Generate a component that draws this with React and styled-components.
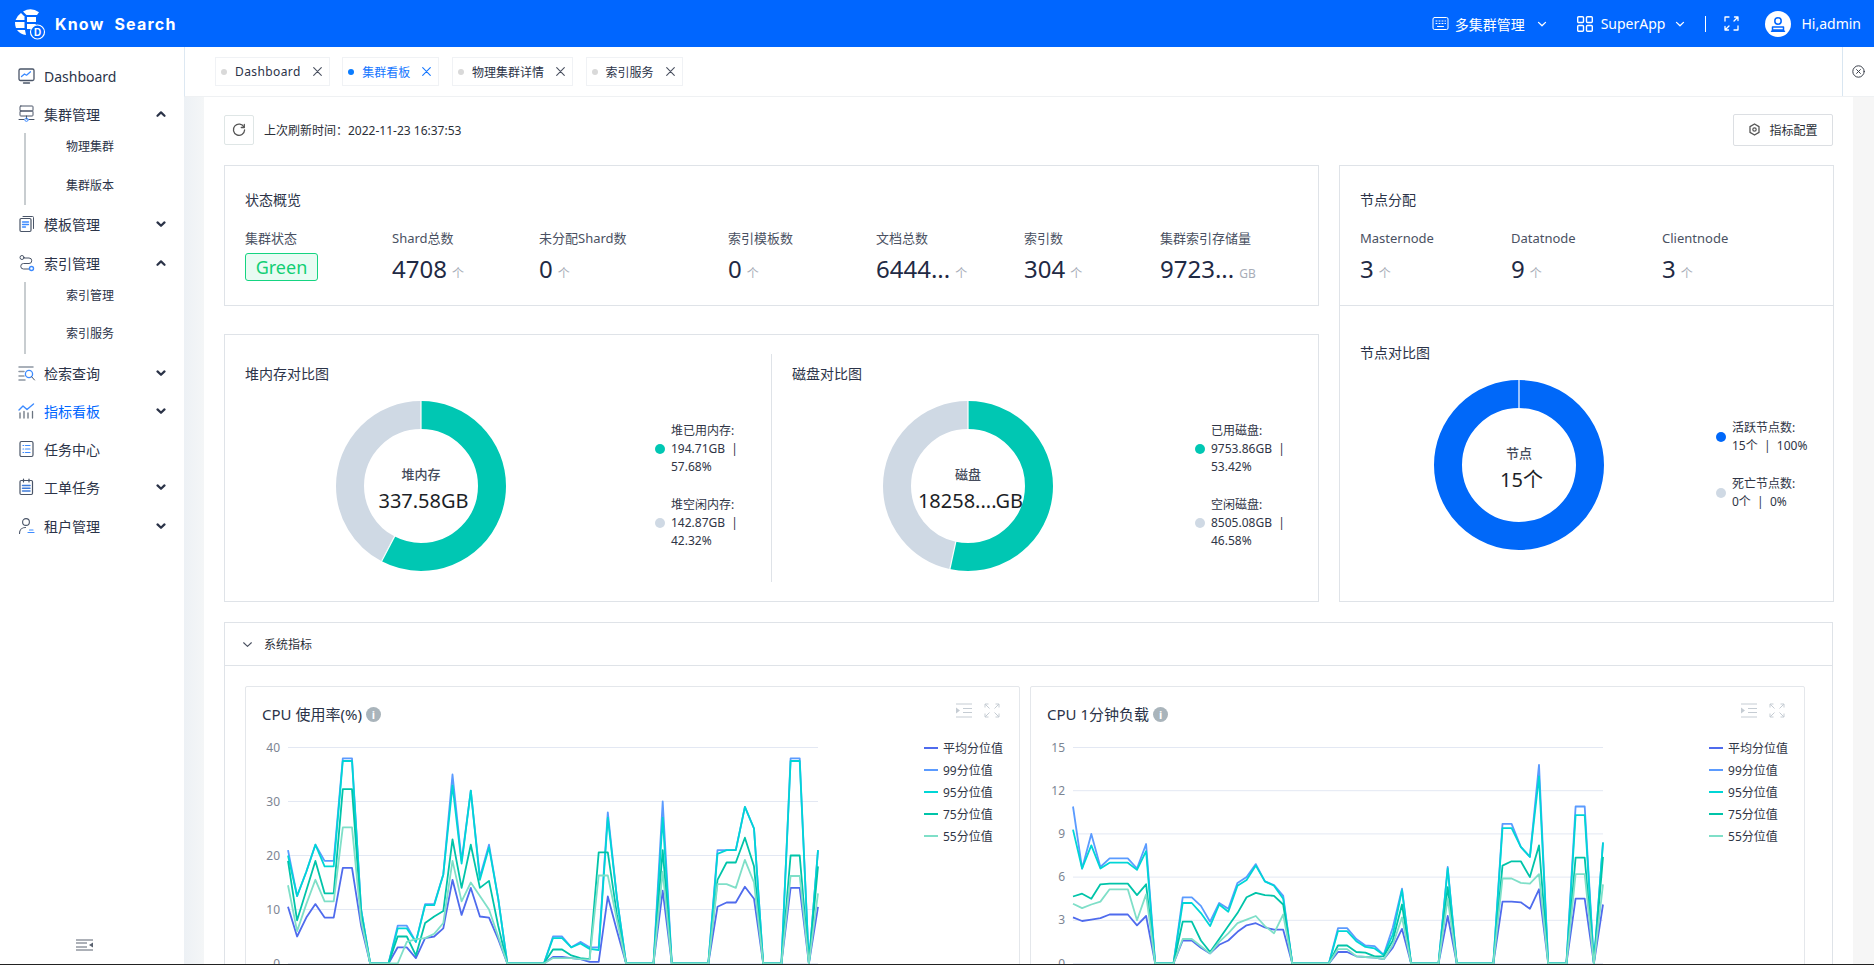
import React from 'react';
import styled, { createGlobalStyle } from 'styled-components';

const GlobalStyle = createGlobalStyle`
    * { box-sizing: border-box; }
    html, body { margin: 0; padding: 0; height: 100%; overflow: hidden; background: #fff; }
    body {
        font-family: "Noto Sans", "Noto Sans CJK SC", sans-serif;
        color: #2b3348;
    }
`;

const BLUE = '#0066ff';
const TEAL = '#00c7b3';
const GREY = '#cfd9e4';

const Shell = styled.div`
    height: 100vh;
    display: flex;
    flex-direction: column;
    overflow: hidden;
    border-bottom: 1px solid #222;
`;

/* ---------- top header ---------- */
const Header = styled.header`
    flex: 0 0 47px;
    background: ${BLUE};
    color: #fff;
    display: flex;
    align-items: center;
    padding-left: 14px;
`;

const Brand = styled.div`
    margin-left: 9px;
    font-family: "Inter", sans-serif;
    font-weight: 700;
    font-size: 16px;
    letter-spacing: 1.2px;
    white-space: pre;
`;

const HeaderRight = styled.div`
    margin-left: auto;
    display: flex;
    align-items: center;
    padding-right: 13px;
`;

const HeaderText = styled.span`
    font-size: 14px;
    margin-left: ${(p) => p.$ml || 0}px;
    white-space: nowrap;
`;

const HeaderChevron = styled.span`
    display: flex;
    margin-left: ${(p) => p.$ml || 0}px;
    margin-right: ${(p) => p.$mr || 0}px;
`;

const HeaderDivider = styled.span`
    width: 1px;
    height: 16px;
    background: #fff;
    margin: 0 18px 0 20px;
`;

const Avatar = styled.span`
    width: 26px;
    height: 26px;
    border-radius: 50%;
    background: #fff;
    margin-left: 26px;
    display: flex;
    align-items: center;
    justify-content: center;
`;

/* ---------- sidebar ---------- */
const Layout = styled.div`
    flex: 1;
    display: flex;
    min-height: 0;
`;

const Sidebar = styled.aside`
    flex: 0 0 184px;
    background: #fff;
    padding-top: 10px;
    position: relative;
    z-index: 1;
`;

const NavItem = styled.div`
    height: 38.2px;
    display: flex;
    align-items: center;
    padding-left: 18px;
    font-size: 14px;
    color: ${(p) => (p.$active ? BLUE : '#2b3348')};
`;

const NavLabel = styled.span`
    margin-left: 8px;
    flex: 1;
`;

const NavChevron = styled.span`
    display: flex;
    margin-right: 18px;
`;

const SubList = styled.div`
    margin-left: 24px;
    height: 72px;
    border-left: 2px solid #c8cdd0;
    padding: 0 0 5px 40px;
    display: flex;
    flex-direction: column;
    gap: 10.5px;
`;

const SubItem = styled.div`
    height: 28px;
    line-height: 28px;
    font-size: 12px;
    color: #2b3348;
`;

const CollapseButton = styled.div`
    position: absolute;
    left: 76px;
    bottom: 13px;
    display: flex;
`;

/* ---------- tabs ---------- */
const Main = styled.main`
    flex: 1;
    min-width: 0;
    display: flex;
    flex-direction: column;
`;

const TabBar = styled.div`
    flex: 0 0 50px;
    display: flex;
    align-items: center;
    border-left: 1px solid #dde8f2;
    border-bottom: 1px solid #eff1f3;
    padding-left: 30px;
    gap: 12.6px;
    background: #fff;
    position: relative;
`;

const Tab = styled.div`
    height: 29px;
    display: flex;
    align-items: center;
    border: 1px solid #f0f2f5;
    padding: 0 7px 0 5px;
    font-size: 12px;
    letter-spacing: ${(p) => (p.$latin ? '0.4px' : 0)};
    color: ${(p) => (p.$active ? '#1677ff' : '#2b3348')};
`;

const TabDot = styled.span`
    width: 6px;
    height: 6px;
    border-radius: 50%;
    margin-right: 8px;
    background: ${(p) => (p.$active ? '#0a7cff' : '#d9d9d9')};
`;

const TabClose = styled.span`
    display: flex;
    margin-left: 12px;
`;

const TabBarEnd = styled.div`
    position: absolute;
    right: 0;
    top: 0;
    bottom: 0;
    width: 32px;
    border-left: 1px solid #d9e6f1;
    display: flex;
    align-items: center;
    justify-content: center;
`;

/* ---------- page ---------- */
const Scroller = styled.div`
    flex: 1;
    min-height: 0;
    overflow: hidden;
    padding: 0 21px 0 20px;
    background: linear-gradient(90deg, #edf1f5 0, #f4f6f7 20px, #f6f6f6 100%);
`;

const Content = styled.div`
    background: #fff;
    padding: 17px 20px 0;
`;

const Toolbar = styled.div`
    display: flex;
    align-items: center;
    height: 31px;
    margin-bottom: 20px;
`;

const RefreshButton = styled.div`
    width: 30px;
    height: 30px;
    border: 1px solid #dfe6e6;
    border-radius: 2px;
    display: flex;
    align-items: center;
    justify-content: center;
`;

const RefreshText = styled.span`
    margin-left: 10px;
    font-size: 12px;
    color: #2b2f38;
`;

const ConfigButton = styled.div`
    margin-left: auto;
    width: 100px;
    height: 32px;
    border: 1px solid #dcdfe3;
    border-radius: 2px;
    display: flex;
    align-items: center;
    justify-content: center;
    gap: 8px;
    font-size: 12px;
    color: #2b2f38;
`;

const OverviewGrid = styled.div`
    display: grid;
    grid-template-columns: 1095px 1fr;
    gap: 20px;
`;

const LeftColumn = styled.div`
    display: flex;
    flex-direction: column;
    gap: 28px;
`;

const Card = styled.section`
    border: 1px solid #dfe3e8;
    background: #fff;
`;

const StatusCard = styled(Card)`
    height: 141px;
    padding: 24px 20px 0;
`;

const NodeCard = styled(Card)`
    display: flex;
    flex-direction: column;
`;

const NodeTop = styled.div`
    height: 140px;
    padding: 24px 20px 0;
    border-bottom: 1px solid #dfe3e8;
`;

const NodeBottom = styled.div`
    padding: 37px 20px 0;
`;

const CardTitle = styled.h3`
    margin: 0;
    font-size: 14px;
    font-weight: 400;
    line-height: 20px;
    color: #2b3348;
`;

const StatRow = styled.div`
    display: flex;
    margin-top: 19px;
`;

const Stat = styled.div`
    flex: 0 0 ${(p) => p.$w}px;
`;

const StatLabel = styled.div`
    font-size: 13px;
    line-height: 18px;
    color: #4a5162;
    white-space: nowrap;
`;

const StatValue = styled.div`
    margin-top: 6px;
    display: flex;
    align-items: baseline;
    height: 32px;
    font-size: 24px;
    line-height: 32px;
    color: #1f2a44;
`;

const StatUnit = styled.span`
    font-size: 12px;
    color: #a8adb8;
    margin-left: 5px;
`;

const HealthBadge = styled.span`
    display: inline-block;
    width: 73px;
    height: 28px;
    margin-top: 6px;
    border: 1px solid #15d481;
    border-radius: 3px;
    background: #e9fbf3;
    color: #12cf74;
    font-size: 18px;
    line-height: 26px;
    text-align: center;
`;

const CompareCard = styled(Card)`
    height: 268px;
    display: flex;
    padding: 19px 0;
`;

const ComparePane = styled.div`
    flex: 0 0 ${(p) => p.$w}px;
    padding: 10px 0 0 ${(p) => p.$pl}px;
    border-right: ${(p) => (p.$divider ? '1px solid #dfe3e8' : 'none')};
`;

const DonutRow = styled.div`
    display: flex;
    align-items: center;
    margin-top: ${(p) => p.$mt}px;
    padding-left: ${(p) => p.$pl}px;
`;

const DonutBox = styled.div`
    position: relative;
    width: 170px;
    height: 170px;
    flex: none;
`;

const DonutCenter = styled.div`
    position: absolute;
    left: 0;
    right: 0;
    top: 62px;
    text-align: center;
`;

const DonutName = styled.div`
    font-size: 13px;
    font-weight: 500;
    line-height: 22px;
    color: #454b5c;
`;

const DonutValue = styled.div`
    font-size: 20px;
    line-height: 32px;
    color: #1c1f27;
    padding-left: 5px;
    white-space: nowrap;
`;

const Legend = styled.div`
    margin-left: ${(p) => p.$ml}px;
    display: flex;
    flex-direction: column;
    gap: ${(p) => p.$gap}px;
`;

const LegendItem = styled.div`
    display: flex;
    align-items: center;
`;

const LegendDot = styled.span`
    width: 10px;
    height: 10px;
    border-radius: 50%;
    flex: none;
    margin-right: 6px;
    background: ${(p) => p.$color};
`;

const LegendText = styled.div`
    font-size: 12px;
    line-height: 18px;
    color: #2f3546;
    white-space: pre;
`;

/* ---------- system metrics ---------- */
const MetricsPanel = styled.section`
    margin-top: 20px;
    border: 1px solid #dfe3e8;
`;

const PanelHeader = styled.div`
    height: 43px;
    display: flex;
    align-items: center;
    padding-left: 17px;
    gap: 11px;
    font-size: 12px;
    color: #2b2f38;
    border-bottom: 1px solid #dfe3e8;
`;

const PanelBody = styled.div`
    display: flex;
    gap: 10px;
    padding: 20px;
`;

const ChartCard = styled.div`
    flex: 0 0 773px;
    border: 1px solid #e4e7eb;
    border-radius: 2px;
    padding: 16px 16px 0;
`;

const ChartHeader = styled.div`
    height: 36px;
    display: flex;
    align-items: flex-start;
`;

const ChartTitle = styled.div`
    font-size: 15px;
    line-height: 22px;
    color: #2b3348;
    display: flex;
    align-items: center;
    gap: 4px;
`;

const InfoDot = styled.span`
    width: 15px;
    height: 15px;
    border-radius: 50%;
    background: #a9b4bb;
    color: #fff;
    font-size: 11px;
    font-weight: 700;
    line-height: 15px;
    text-align: center;
`;

const ChartTools = styled.div`
    margin-left: auto;
    margin-right: 3px;
    display: flex;
    gap: 12px;
`;

const ChartBody = styled.div`
    display: flex;
    align-items: flex-start;
`;

const ChartLegend = styled.div`
    margin-left: 2px;
    display: flex;
    flex-direction: column;
    gap: 4px;
`;

const ChartLegendItem = styled.div`
    height: 18px;
    display: flex;
    align-items: center;
    font-size: 12px;
    color: #2f3546;
    white-space: nowrap;
`;

const ChartLegendLine = styled.span`
    width: 14px;
    height: 2px;
    margin-right: 5px;
    background: ${(p) => p.$color};
`;

/* ---------- icons ---------- */
const INK = '#4a5568';
const SKY = '#3d8bff';

const Svg = ({ size = 18, box = 18, children }) => (
    <svg width={size} height={size} viewBox={`0 0 ${box} ${box}`} fill="none" strokeLinecap="round" strokeLinejoin="round">
        {children}
    </svg>
);

const Logo = () => (
    <svg width="32" height="32" viewBox="0 0 32 32">
        <path d="M9 3.5 A14.5 14.5 0 0 1 25 4.2 L23 7 L12.5 7 Z" fill="#fff" />
        <path d="M7 5 L10.5 8.5 L10.5 12 L1.6 12 A14.5 14.5 0 0 1 7 5 Z" fill="#fff" />
        <path d="M13 9 L22 9 L22 14 L13 14 Z" fill="#fff" />
        <path d="M1 14 L10.5 14 L10.5 20 L2 20 A14.5 14.5 0 0 1 1 14 Z" fill="#fff" />
        <path d="M13 16 L22 16 L19 21 L13 21 Z" fill="#fff" />
        <path d="M3 22 L11 22 L12 27 A14 14 0 0 1 3 22 Z" fill="#fff" />
        <circle cx="23.5" cy="24" r="7" fill={BLUE} stroke="#fff" strokeWidth="1.2" />
        <text x="23.5" y="27.5" textAnchor="middle" fontSize="10" fontWeight="700" fill="#fff" fontFamily="Inter, sans-serif">D</text>
    </svg>
);

const KeyboardIcon = () => (
    <Svg size={17} box={17}>
        <rect x="1" y="2.5" width="15" height="12" rx="1.5" stroke="#fff" />
        <path d="M4 6h1M7 6h1M10 6h1M13 6h0.5M4 8.5h1M7 8.5h1M10 8.5h1M13 8.5h0.5M5.5 11.5h6" stroke="#fff" />
    </Svg>
);

const GridIcon = () => (
    <Svg size={16} box={16}>
        <rect x="0.7" y="0.7" width="5.8" height="5.8" rx="1" stroke="#fff" strokeWidth="1.4" />
        <rect x="9.5" y="0.7" width="5.8" height="5.8" rx="1" stroke="#fff" strokeWidth="1.4" />
        <rect x="0.7" y="9.5" width="5.8" height="5.8" rx="1" stroke="#fff" strokeWidth="1.4" />
        <rect x="9.5" y="9.5" width="5.8" height="5.8" rx="1" stroke="#fff" strokeWidth="1.4" />
    </Svg>
);

const FullscreenIcon = () => (
    <Svg size={15} box={15}>
        <path d="M1 5V1h4M10 14h4v-4M14 1 10 5M14 1h-3.5M14 1v3.5M1 14l4-4M1 14h3.5M1 14v-3.5" stroke="#fff" strokeWidth="1.3" />
    </Svg>
);

const AvatarIcon = () => (
    <Svg size={18} box={18}>
        <circle cx="9" cy="6" r="3.2" stroke={BLUE} strokeWidth="1.5" />
        <path d="M3.5 15v-3h11v3zM2.5 16.3h13" stroke={BLUE} strokeWidth="1.5" />
    </Svg>
);

const Chevron = ({ up, color = '#2b3348', width = 2.2, size = 10 }) => (
    <Svg size={size} box={10}>
        <path d={up ? 'M1.5 6.8 5 3.4l3.5 3.4' : 'M1.5 3.4 5 6.8l3.5-3.4'} stroke={color} strokeWidth={width} />
    </Svg>
);

const CloseGlyph = ({ color = '#4a5060' }) => (
    <Svg size={9} box={9}>
        <path d="M0.7 0.7l7.6 7.6M8.3 0.7 0.7 8.3" stroke={color} strokeWidth="1.1" />
    </Svg>
);

const navIcons = {
    dashboard: (
        <>
            <rect x="1" y="2" width="15" height="11.5" rx="1.5" stroke={INK} strokeWidth="1.3" />
            <path d="M3.5 9.5 6.5 7l2 1.2 4-3.4" stroke={SKY} strokeWidth="1.3" />
            <path d="M5.5 16h6" stroke={INK} strokeWidth="1.3" />
        </>
    ),
    cluster: (
        <>
            <rect x="2" y="1" width="13" height="5" rx="0.8" stroke={INK} />
            <rect x="2" y="6" width="13" height="5" rx="0.8" stroke={INK} />
            <path d="M8.5 11v3M1 14.5h5M11 14.5h5" stroke={INK} />
            <circle cx="8.5" cy="14.7" r="1.7" stroke={SKY} />
        </>
    ),
    template: (
        <>
            <path d="M5 1.5h9.5a1 1 0 0 1 1 1v11" stroke={INK} />
            <rect x="2" y="3.5" width="11" height="13" rx="1.2" stroke={INK} strokeWidth="1.2" />
            <path d="M4.5 7h6M4.5 9.5h6M4.5 12h3" stroke={SKY} strokeWidth="1.3" />
        </>
    ),
    index: (
        <>
            <circle cx="4" cy="3.5" r="2" stroke={INK} />
            <path d="M6 4h5a2.5 2.5 0 0 1 0 5.5H5.5a2.5 2.5 0 0 0 0 5.5h6" stroke={INK} />
            <circle cx="13.5" cy="14.5" r="2" stroke={SKY} strokeWidth="1.4" />
        </>
    ),
    search: (
        <>
            <path d="M1 3h14M1 7.5h5M1 12h5M1 16h6" stroke="#8d96a3" strokeWidth="1.5" />
            <circle cx="11" cy="10" r="3.6" stroke={SKY} strokeWidth="1.3" />
            <path d="M13.6 12.7 16.5 16" stroke={INK} />
        </>
    ),
    metric: (
        <>
            <path d="M1 8 5 4l4 3.5L15.5 2" stroke={SKY} strokeWidth="1.4" />
            <path d="M2 11v5M6 9.5V16M10 11v5M14.5 9.5V16" stroke="#6b7480" strokeWidth="1.3" />
        </>
    ),
    task: (
        <>
            <rect x="2" y="1.5" width="13" height="15" rx="1.5" stroke={INK} strokeWidth="1.2" />
            <path d="M5 5.5h.7M7.5 5.5H12M5 9h.7M7.5 9H12M5 12.5h.7M7.5 12.5H12" stroke={SKY} strokeWidth="1.2" />
        </>
    ),
    order: (
        <>
            <rect x="2" y="2.5" width="12.5" height="14" rx="1.2" stroke={INK} strokeWidth="1.2" />
            <path d="M5.5 1v3M11 1v3" stroke={INK} strokeWidth="1.2" />
            <path d="M4.5 7.5h7.5M4.5 10.3h7.5M4.5 13h7.5" stroke="#3f7bd8" strokeWidth="1.5" />
        </>
    ),
    tenant: (
        <>
            <circle cx="8" cy="5" r="3.4" stroke={INK} strokeWidth="1.1" />
            <path d="M1.5 16.5c0-3.5 2.5-6 6-6" stroke={INK} strokeWidth="1.1" />
            <path d="M11.5 13h3.5M10 15.5h6" stroke={SKY} strokeWidth="1.2" />
        </>
    ),
};

const RefreshIcon = () => (
    <Svg size={14} box={14}>
        <path d="M12 4.2A5.6 5.6 0 1 0 12.6 7" stroke="#555" strokeWidth="1.3" />
        <path d="M12.3 1.5v3h-3" stroke="#555" strokeWidth="1.3" />
    </Svg>
);

const GearIcon = () => (
    <Svg size={13} box={13}>
        <path d="M6.5 1 11 3.6v5.8L6.5 12 2 9.4V3.6z" stroke="#555" strokeWidth="1.3" />
        <circle cx="6.5" cy="6.5" r="1.7" stroke="#555" strokeWidth="1.2" />
    </Svg>
);

const CloseCircleIcon = () => (
    <Svg size={13} box={13}>
        <circle cx="6.5" cy="6.5" r="5.7" stroke="#3a3f4a" />
        <path d="M4.6 4.6l3.8 3.8M8.4 4.6 4.6 8.4" stroke="#3a3f4a" />
    </Svg>
);

const CollapseIcon = () => (
    <svg width="18" height="12" viewBox="0 0 18 12" fill="none">
        <path d="M0 1h17M0 4h11M0 8h11M0 11h17" stroke="#5a6270" />
        <path d="M17 3.5v5L13 6z" fill="#5a6270" />
    </svg>
);

const IndentIcon = () => (
    <svg width="16" height="15" viewBox="0 0 16 15" fill="none">
        <path d="M0 1h16M7 5.5h9M7 9.5h9M0 14h16" stroke="#c5ccd3" />
        <path d="M0 4.5 4 7.5 0 10.5z" fill="#c5ccd3" />
    </svg>
);

const ExpandIcon = () => (
    <svg width="16" height="15" viewBox="0 0 16 15" fill="none">
        <path d="M1 1l4.5 4.5M1 1v3.5M1 1h3.5M15 1l-4.5 4.5M15 1v3.5M15 1h-3.5M1 14l4.5-4.5M1 14v-3.5M1 14h3.5M15 14l-4.5-4.5M15 14v-3.5M15 14h-3.5" stroke="#c5ccd3" />
    </svg>
);

/* ---------- donut ---------- */
const Donut = ({ segments, name, value }) => {
    const r = 71;
    const len = 2 * Math.PI * r;
    const total = segments.reduce((s, x) => s + x.value, 0);
    let used = 0;
    const arcs = [];
    const cuts = [];
    segments.forEach((seg) => {
        const part = seg.value / total;
        arcs.push(
            <circle
                key={seg.color}
                cx="85"
                cy="85"
                r={r}
                fill="none"
                stroke={seg.color}
                strokeWidth="28"
                strokeDasharray={`${part * len} ${len}`}
                strokeDashoffset={-used * len}
                transform="rotate(-90 85 85)"
            />
        );
        const a = used * 2 * Math.PI;
        cuts.push(
            <line
                key={`cut-${seg.color}`}
                x1={85 + 56 * Math.sin(a)}
                y1={85 - 56 * Math.cos(a)}
                x2={85 + 86 * Math.sin(a)}
                y2={85 - 86 * Math.cos(a)}
                stroke="#fff"
                strokeWidth="1.2"
            />
        );
        used += part;
    });
    return (
        <DonutBox>
            <svg width="170" height="170" viewBox="0 0 170 170">
                {arcs}
                {cuts}
            </svg>
            <DonutCenter>
                <DonutName>{name}</DonutName>
                <DonutValue>{value}</DonutValue>
            </DonutCenter>
        </DonutBox>
    );
};

/* ---------- line chart ---------- */
const SERIES = [
    { name: '平均分位值', color: '#4f6bed', col: 4 },
    { name: '99分位值', color: '#5b9bff', col: 0 },
    { name: '95分位值', color: '#00d6d6', col: 1 },
    { name: '75分位值', color: '#00c4a9', col: 2 },
    { name: '55分位值', color: '#7fdfc8', col: 3 },
];

const O = [0, 0, 0, 0, 0];

const cpuUsage = [
    [21, 20, 19, 14.5, 10.5], [12.5, 12.5, 8, 6, 5], [17, 17, 13.5, 11, 8.5], [22, 22, 19, 15.5, 11],
    [19, 18, 13, 11.5, 8.5], [19, 18, 13, 11.5, 8.5], [38, 37.5, 32.3, 25.2, 17.7], [38, 37.5, 32.3, 25.2, 17.7],
    [10, 10, 9, 8, 7], O, O, O,
    [7, 6.5, 5, 0, 3], [7, 6.5, 5, 4, 3], [4, 4, 1.5, 4.5, 1], [11, 10.8, 7.5, 4.7, 4.7],
    [11, 10.8, 8.7, 5.5, 5], [16.5, 16.5, 9.7, 7.5, 6.5], [35, 33, 23, 19, 15.5], [19, 18.5, 14, 11.5, 9],
    [32, 32, 22, 15, 14], [16, 15.5, 14, 12.5, 8.7], [22, 21.5, 15.3, 10, 8.5], [12, 12, 7, 5, 4.5],
    O, O, O, O, O,
    [5, 4.7, 2.6, 1, 1.2], [5, 4.7, 2.6, 1, 1.2], [3, 3, 1.5, 1, 1], [4, 3.7, 1, 0.8, 0.8],
    [3, 2.7, 0.8, 0.7, 0.3], [3, 2.5, 20.6, 16.3, 0.3], [28, 27, 20.6, 16.3, 12.4], [12, 12, 9, 8, 6],
    O, O, O, O,
    [30, 27, 21, 17, 13.5], O, O, O, O, O,
    [21, 20.3, 15.5, 14.7, 10.5], [21, 21, 18.7, 14.7, 11.3], [21, 21, 18.7, 14, 11.3], [29, 29, 23.3, 19.2, 14.2],
    [25, 25, 18, 15, 12], O, O, O,
    [38, 37.5, 20, 16.2, 14], [38, 37.5, 20, 16.2, 14], O, [21, 21, 18, 13, 10.5],
];

const cpuLoad = [
    [10.9, 9.3, 4.65, 4.15, 3.2], [6.6, 6.6, 4.85, 3.85, 2.95], [9, 8.2, 4.5, 4.1, 3.05], [6.7, 6.6, 5.5, 4.3, 3.15],
    [7.3, 7, 5.55, 5.15, 3.4], [7.3, 7, 5.55, 5.15, 3.4], [7.3, 7, 5.55, 5.15, 3.4], [6.6, 6.5, 4.75, 3, 2.65],
    [8.3, 7.8, 5.5, 4.8, 3.3], O, O, O,
    [4.6, 4.2, 2.9, 1.7, 1.6], [4.6, 4.2, 2.9, 1.7, 1.6], [4, 3.5, 1.6, 1.2, 1.1], [2.9, 2.6, 0.8, 0.7, 0.7],
    [4.2, 4.1, 1.7, 1.5, 1.3], [3.8, 3.6, 2.6, 2.1, 1.6], [5.6, 5.4, 3.5, 2.8, 2.2], [6, 5.8, 4.6, 3.05, 2.65],
    [6.9, 6.8, 4.9, 3.3, 2.8], [5.7, 5.7, 4.75, 2.6, 2.5], [5.45, 5.4, 4.7, 2.1, 2.35], [4.7, 4.5, 4.1, 3.4, 2.35],
    O, O, O, O, O,
    [2.45, 2.25, 1.25, 1, 0.8], [2.45, 2.25, 1.25, 1, 0.8], [1.7, 1.55, 0.8, 0.5, 0.5], [1.25, 1.15, 0.75, 0.45, 0.45],
    [1.2, 1.05, 0.5, 0.4, 0.4], [0.6, 0.6, 0.5, 0.3, 0.3], [2.5, 2, 1.6, 1.3, 1.1], [5.2, 5.1, 4.1, 3.2, 2.4],
    O, O, O, O,
    [6.7, 6.6, 5.3, 4.5, 3.3], O, O, O, O, O,
    [9.7, 9.4, 6.8, 5.9, 4.3], [9.7, 9.4, 7.1, 5.9, 4.3], [8.1, 8.1, 7.1, 5.6, 4.25], [7.4, 7.4, 6, 5.55, 3.8],
    [13.8, 13, 8.2, 6.2, 5.15], O, O, O,
    [10.9, 10.3, 7.35, 6.2, 4.5], [10.9, 10.3, 7.35, 6.2, 4.5], O, [8.4, 8.4, 7.4, 5.5, 4.1],
];

const PLOT_LEFT = 26;
const PLOT_RIGHT = 556;
const PLOT_TOP = 8.5;
const PLOT_BOTTOM = 224.5;

const LineChart = ({ rows, max, ticks }) => {
    const x = (i) => PLOT_LEFT + (i * (PLOT_RIGHT - PLOT_LEFT)) / (rows.length - 1);
    const y = (v) => PLOT_BOTTOM - (v / max) * (PLOT_BOTTOM - PLOT_TOP);
    return (
        <svg width="660" height="240" viewBox="0 0 660 240">
            {ticks.map((t) => (
                <g key={t}>
                    <line x1={PLOT_LEFT} x2={PLOT_RIGHT} y1={y(t)} y2={y(t)} stroke="#e3e8f3" />
                    <text x="18" y={y(t) + 4} textAnchor="end" fontSize="12" fill="#7c8593" fontFamily="Noto Sans, sans-serif">
                        {t}
                    </text>
                </g>
            ))}
            {SERIES.map((s) => (
                <polyline
                    key={s.name}
                    fill="none"
                    stroke={s.color}
                    strokeWidth="1.8"
                    strokeLinejoin="round"
                    points={rows.map((r, i) => `${x(i).toFixed(1)},${y(r[s.col]).toFixed(1)}`).join(' ')}
                />
            ))}
        </svg>
    );
};

const MetricChart = ({ title, rows, max, ticks }) => (
    <ChartCard>
        <ChartHeader>
            <ChartTitle>
                {title}
                <InfoDot>i</InfoDot>
            </ChartTitle>
            <ChartTools>
                <IndentIcon />
                <ExpandIcon />
            </ChartTools>
        </ChartHeader>
        <ChartBody>
            <LineChart rows={rows} max={max} ticks={ticks} />
            <ChartLegend>
                {SERIES.map((s) => (
                    <ChartLegendItem key={s.name}>
                        <ChartLegendLine $color={s.color} />
                        {s.name}
                    </ChartLegendItem>
                ))}
            </ChartLegend>
        </ChartBody>
    </ChartCard>
);

/* ---------- page data ---------- */
const stats = [
    { w: 147, label: 'Shard总数', value: '4708', unit: '个' },
    { w: 189, label: '未分配Shard数', value: '0', unit: '个' },
    { w: 148, label: '索引模板数', value: '0', unit: '个' },
    { w: 148, label: '文档总数', value: '6444...', unit: '个' },
    { w: 136, label: '索引数', value: '304', unit: '个' },
    { w: 150, label: '集群索引存储量', value: '9723...', unit: 'GB' },
];

const nodes = [
    { label: 'Masternode', value: '3' },
    { label: 'Datatnode', value: '9' },
    { label: 'Clientnode', value: '3' },
];

const tabs = [
    { name: 'Dashboard', latin: true },
    { name: '集群看板', active: true },
    { name: '物理集群详情' },
    { name: '索引服务' },
];

const NavRow = ({ icon, label, open, hasChildren, active }) => (
    <NavItem $active={active}>
        <Svg>{navIcons[icon]}</Svg>
        <NavLabel>{label}</NavLabel>
        {hasChildren && (
            <NavChevron>
                <Chevron up={open} />
            </NavChevron>
        )}
    </NavItem>
);

const App = () => (
    <Shell>
        <GlobalStyle />
        <Header>
            <Logo />
            <Brand>{'Know  Search'}</Brand>
            <HeaderRight>
                <KeyboardIcon />
                <HeaderText $ml={6}>多集群管理</HeaderText>
                <HeaderChevron $ml={12} $mr={30}>
                    <Chevron color="#fff" width={1.3} />
                </HeaderChevron>
                <GridIcon />
                <HeaderText $ml={8}>SuperApp</HeaderText>
                <HeaderChevron $ml={10}>
                    <Chevron color="#fff" width={1.3} />
                </HeaderChevron>
                <HeaderDivider />
                <FullscreenIcon />
                <Avatar>
                    <AvatarIcon />
                </Avatar>
                <HeaderText $ml={10}>Hi,admin</HeaderText>
            </HeaderRight>
        </Header>
        <Layout>
            <Sidebar>
                <NavRow icon="dashboard" label="Dashboard" />
                <NavRow icon="cluster" label="集群管理" hasChildren open />
                <SubList>
                    <SubItem>物理集群</SubItem>
                    <SubItem>集群版本</SubItem>
                </SubList>
                <NavRow icon="template" label="模板管理" hasChildren />
                <NavRow icon="index" label="索引管理" hasChildren open />
                <SubList>
                    <SubItem>索引管理</SubItem>
                    <SubItem>索引服务</SubItem>
                </SubList>
                <NavRow icon="search" label="检索查询" hasChildren />
                <NavRow icon="metric" label="指标看板" hasChildren active />
                <NavRow icon="task" label="任务中心" />
                <NavRow icon="order" label="工单任务" hasChildren />
                <NavRow icon="tenant" label="租户管理" hasChildren />
                <CollapseButton>
                    <CollapseIcon />
                </CollapseButton>
            </Sidebar>
            <Main>
                <TabBar>
                    {tabs.map((t) => (
                        <Tab key={t.name} $active={t.active} $latin={t.latin}>
                            <TabDot $active={t.active} />
                            {t.name}
                            <TabClose>
                                <CloseGlyph color={t.active ? '#1677ff' : '#4a5060'} />
                            </TabClose>
                        </Tab>
                    ))}
                    <TabBarEnd>
                        <CloseCircleIcon />
                    </TabBarEnd>
                </TabBar>
                <Scroller>
                    <Content>
                        <Toolbar>
                            <RefreshButton>
                                <RefreshIcon />
                            </RefreshButton>
                            <RefreshText>上次刷新时间：2022-11-23 16:37:53</RefreshText>
                            <ConfigButton>
                                <GearIcon />
                                指标配置
                            </ConfigButton>
                        </Toolbar>
                        <OverviewGrid>
                            <LeftColumn>
                                <StatusCard>
                                    <CardTitle>状态概览</CardTitle>
                                    <StatRow>
                                        <Stat $w={147}>
                                            <StatLabel>集群状态</StatLabel>
                                            <HealthBadge>Green</HealthBadge>
                                        </Stat>
                                        {stats.map((s) => (
                                            <Stat key={s.label} $w={s.w}>
                                                <StatLabel>{s.label}</StatLabel>
                                                <StatValue>
                                                    {s.value}
                                                    <StatUnit>{s.unit}</StatUnit>
                                                </StatValue>
                                            </Stat>
                                        ))}
                                    </StatRow>
                                </StatusCard>
                                <CompareCard>
                                    <ComparePane $w={547} $pl={20} $divider>
                                        <CardTitle>堆内存对比图</CardTitle>
                                        <DonutRow $mt={17} $pl={91}>
                                            <Donut
                                                name="堆内存"
                                                value="337.58GB"
                                                segments={[
                                                    { value: 57.68, color: TEAL },
                                                    { value: 42.32, color: GREY },
                                                ]}
                                            />
                                            <Legend $ml={149} $gap={20}>
                                                <LegendItem>
                                                    <LegendDot $color={TEAL} />
                                                    <LegendText>{'堆已用内存:\n194.71GB  |\n57.68%'}</LegendText>
                                                </LegendItem>
                                                <LegendItem>
                                                    <LegendDot $color={GREY} />
                                                    <LegendText>{'堆空闲内存:\n142.87GB  |\n42.32%'}</LegendText>
                                                </LegendItem>
                                            </Legend>
                                        </DonutRow>
                                    </ComparePane>
                                    <ComparePane $w={546} $pl={20}>
                                        <CardTitle>磁盘对比图</CardTitle>
                                        <DonutRow $mt={17} $pl={91}>
                                            <Donut
                                                name="磁盘"
                                                value="18258....GB"
                                                segments={[
                                                    { value: 53.42, color: TEAL },
                                                    { value: 46.58, color: GREY },
                                                ]}
                                            />
                                            <Legend $ml={142} $gap={20}>
                                                <LegendItem>
                                                    <LegendDot $color={TEAL} />
                                                    <LegendText>{'已用磁盘:\n9753.86GB  |\n53.42%'}</LegendText>
                                                </LegendItem>
                                                <LegendItem>
                                                    <LegendDot $color={GREY} />
                                                    <LegendText>{'空闲磁盘:\n8505.08GB  |\n46.58%'}</LegendText>
                                                </LegendItem>
                                            </Legend>
                                        </DonutRow>
                                    </ComparePane>
                                </CompareCard>
                            </LeftColumn>
                            <NodeCard>
                                <NodeTop>
                                    <CardTitle>节点分配</CardTitle>
                                    <StatRow>
                                        {nodes.map((n) => (
                                            <Stat key={n.label} $w={151}>
                                                <StatLabel>{n.label}</StatLabel>
                                                <StatValue>
                                                    {n.value}
                                                    <StatUnit>个</StatUnit>
                                                </StatValue>
                                            </Stat>
                                        ))}
                                    </StatRow>
                                </NodeTop>
                                <NodeBottom>
                                    <CardTitle>节点对比图</CardTitle>
                                    <DonutRow $mt={17} $pl={74}>
                                        <Donut
                                            name="节点"
                                            value="15个"
                                            segments={[{ value: 100, color: '#0068f9' }]}
                                        />
                                        <Legend $ml={112} $gap={20}>
                                            <LegendItem>
                                                <LegendDot $color="#0068f9" />
                                                <LegendText>{'活跃节点数:\n15个  |  100%'}</LegendText>
                                            </LegendItem>
                                            <LegendItem>
                                                <LegendDot $color={GREY} />
                                                <LegendText>{'死亡节点数:\n0个  |  0%'}</LegendText>
                                            </LegendItem>
                                        </Legend>
                                    </DonutRow>
                                </NodeBottom>
                            </NodeCard>
                        </OverviewGrid>
                        <MetricsPanel>
                            <PanelHeader>
                                <Chevron color="#4a5060" width={1} size={11} />
                                系统指标
                            </PanelHeader>
                            <PanelBody>
                                <MetricChart title="CPU 使用率(%)" rows={cpuUsage} max={40} ticks={[0, 10, 20, 30, 40]} />
                                <MetricChart title="CPU 1分钟负载" rows={cpuLoad} max={15} ticks={[0, 3, 6, 9, 12, 15]} />
                            </PanelBody>
                        </MetricsPanel>
                    </Content>
                </Scroller>
            </Main>
        </Layout>
    </Shell>
);

export default App;
